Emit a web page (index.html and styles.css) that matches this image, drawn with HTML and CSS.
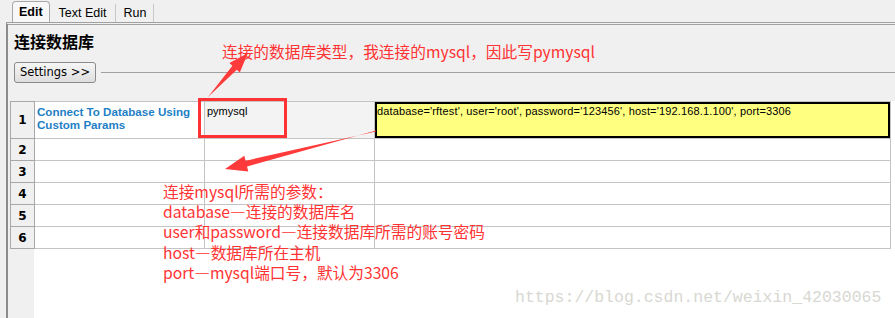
FILE: index.html
```html
<!DOCTYPE html>
<html lang="zh">
<head>
  <meta charset="UTF-8">
  <title>连接数据库</title>
  <link rel="stylesheet" href="styles.css">
</head>
<body>
  <div class="tabs">
    <div class="tab active">Edit</div>
    <div class="tab">Text Edit</div>
    <div class="tab">Run</div>
  </div>

  <div class="panel">
    <h1 class="title">连接数据库</h1>
    <div class="settings-row">
      <button class="settings">Settings &gt;&gt;</button>
      <div class="rule"></div>
    </div>

    <div class="grid">
      <table>
        <tr class="first">
          <td class="num">1</td>
          <td class="kw">Connect To Database Using Custom Params</td>
          <td class="arg gray">pymysql</td>
          <td class="arg yellow">database='rftest', user='root', password='123456', host='192.168.1.100', port=3306</td>
        </tr>
        <tr><td class="num">2</td><td></td><td></td><td></td></tr>
        <tr><td class="num">3</td><td></td><td></td><td></td></tr>
        <tr><td class="num">4</td><td></td><td></td><td></td></tr>
        <tr><td class="num">5</td><td></td><td></td><td></td></tr>
        <tr><td class="num">6</td><td></td><td></td><td></td></tr>
      </table>
    </div>
  </div>

  <!-- 标注 -->
  <div class="note note-top">连接的数据库类型，我连接的mysql，因此写pymysql</div>
  <div class="note note-params">
    连接mysql所需的参数：<br>
    database—连接的数据库名<br>
    user和password—连接数据库所需的账号密码<br>
    host—数据库所在主机<br>
    port—mysql端口号，默认为3306
  </div>
  <div class="redbox"></div>
  <svg class="arrows" width="895" height="318" viewBox="0 0 895 318">
    <polygon points="208,97 236.8,69.8 239.8,72.5 248,53 229.4,63.1 232.4,65.8" />
    <polygon points="376,130.4 247,166.5 248.3,171.4 225,169 244.3,155.8 245.6,160.7 376,131.6" />
  </svg>
  <div class="watermark">https://blog.csdn.net/weixin_42030065</div>
</body>
</html>
```

FILE: styles.css
```css
body {
  margin: 0;
  width: 895px;
  height: 318px;
  overflow: hidden;
  position: relative;
  background: #f0f0f0;
  font-family: "Liberation Sans", Arial, sans-serif;
  color: #000;
}
.tabs {
  display: flex;
  align-items: flex-end;
  height: 22px;
  padding-left: 12px;
}
.tab {
  font-size: 12.5px;
  height: 18px;
  line-height: 18px;
  padding: 0 8px 0 9px;
  border-right: 1px solid #c8c8c8;
}
.tab:last-child {
  padding: 0 7px 0 8px;
}
.tab.active {
  font-weight: bold;
  height: 20px;
  line-height: 21px;
  padding: 0 6px;
  background: #f8f8f8;
  border: 1px solid #a8a8a8;
  border-bottom: none;
  border-radius: 4px 4px 0 0;
}
.panel {
  display: flex;
  flex-direction: column;
  margin-left: 6px;
  height: 296px;
  border-left: 2px solid #8c8c8c;
  border-top: 3px double #a0a0a0;
  box-sizing: border-box;
}
.title {
  margin: 0;
  padding: 5px 0 0 6px;
  height: 30px;
  box-sizing: border-box;
  font-size: 16px;
  font-weight: bold;
  font-family: "Noto Sans CJK SC", sans-serif;
  line-height: 22px;
}
.settings-row {
  display: flex;
  align-items: center;
  padding: 7px 0 0 6px;
  height: 20px;
}
.settings {
  width: 82px;
  height: 21px;
  padding: 0;
  font-family: "DejaVu Sans", Tahoma, sans-serif;
  font-size: 11.5px;
  color: #000;
  background: linear-gradient(#f6f6f6, #dedede);
  border: 1px solid #8a8a8a;
  border-radius: 3px;
}
.rule {
  flex: 1;
  height: 1px;
  margin-left: 5px;
  background: #a0a0a0;
}
.grid {
  flex: 1;
  margin: 19px 0 0 2px;
  background: linear-gradient(to right, #f0f0f0 24px, #fff 24px);
}
table {
  border-collapse: collapse;
  table-layout: fixed;
}
td {
  box-sizing: border-box;
  width: 170px;
  height: 22px;
  padding: 0;
  border: 1px solid #c4c4c4;
  background: #fff;
  vertical-align: top;
}
td.num {
  width: 24px;
  background: #f0f0f0;
  border-color: #a8a8a8;
  text-align: center;
  vertical-align: middle;
  font-family: "DejaVu Sans", Tahoma, sans-serif;
  font-weight: bold;
  font-size: 12px;
}
td:last-child {
  width: 516px;
}
tr.first td {
  height: 37px;
}
td.kw {
  padding: 3px 0 0 2px;
  font-size: 11.6px;
  line-height: 13px;
  font-weight: bold;
  color: #1f7fc6;
}
td.arg {
  padding: 3px 0 0 2px;
  font-size: 11px;
  line-height: 13px;
}
td.gray {
  background: #f3f3f3;
}
td.yellow {
  letter-spacing: 0.15px;
  background: #ffff80;
  box-shadow: inset 0 0 0 2px #000;
  white-space: nowrap;
}
.note {
  position: absolute;
  font-family: "Noto Sans CJK SC", sans-serif;
  font-size: 15.7px;
  color: #ff3333;
}
.note-top {
  left: 222px;
  top: 42px;
  line-height: 20px;
}
.note-params {
  left: 163px;
  top: 182px;
  line-height: 20.2px;
}
.redbox {
  position: absolute;
  left: 198px;
  top: 98px;
  width: 83px;
  height: 34px;
  border: 3px solid #ff3333;
}
.arrows {
  position: absolute;
  left: 0;
  top: 0;
}
.arrows polygon {
  fill: #ff3a3a;
}
.watermark {
  position: absolute;
  left: 515px;
  top: 288px;
  font-family: "Liberation Mono", monospace;
  font-size: 16.5px;
  color: #d8d8d2;
}
```
